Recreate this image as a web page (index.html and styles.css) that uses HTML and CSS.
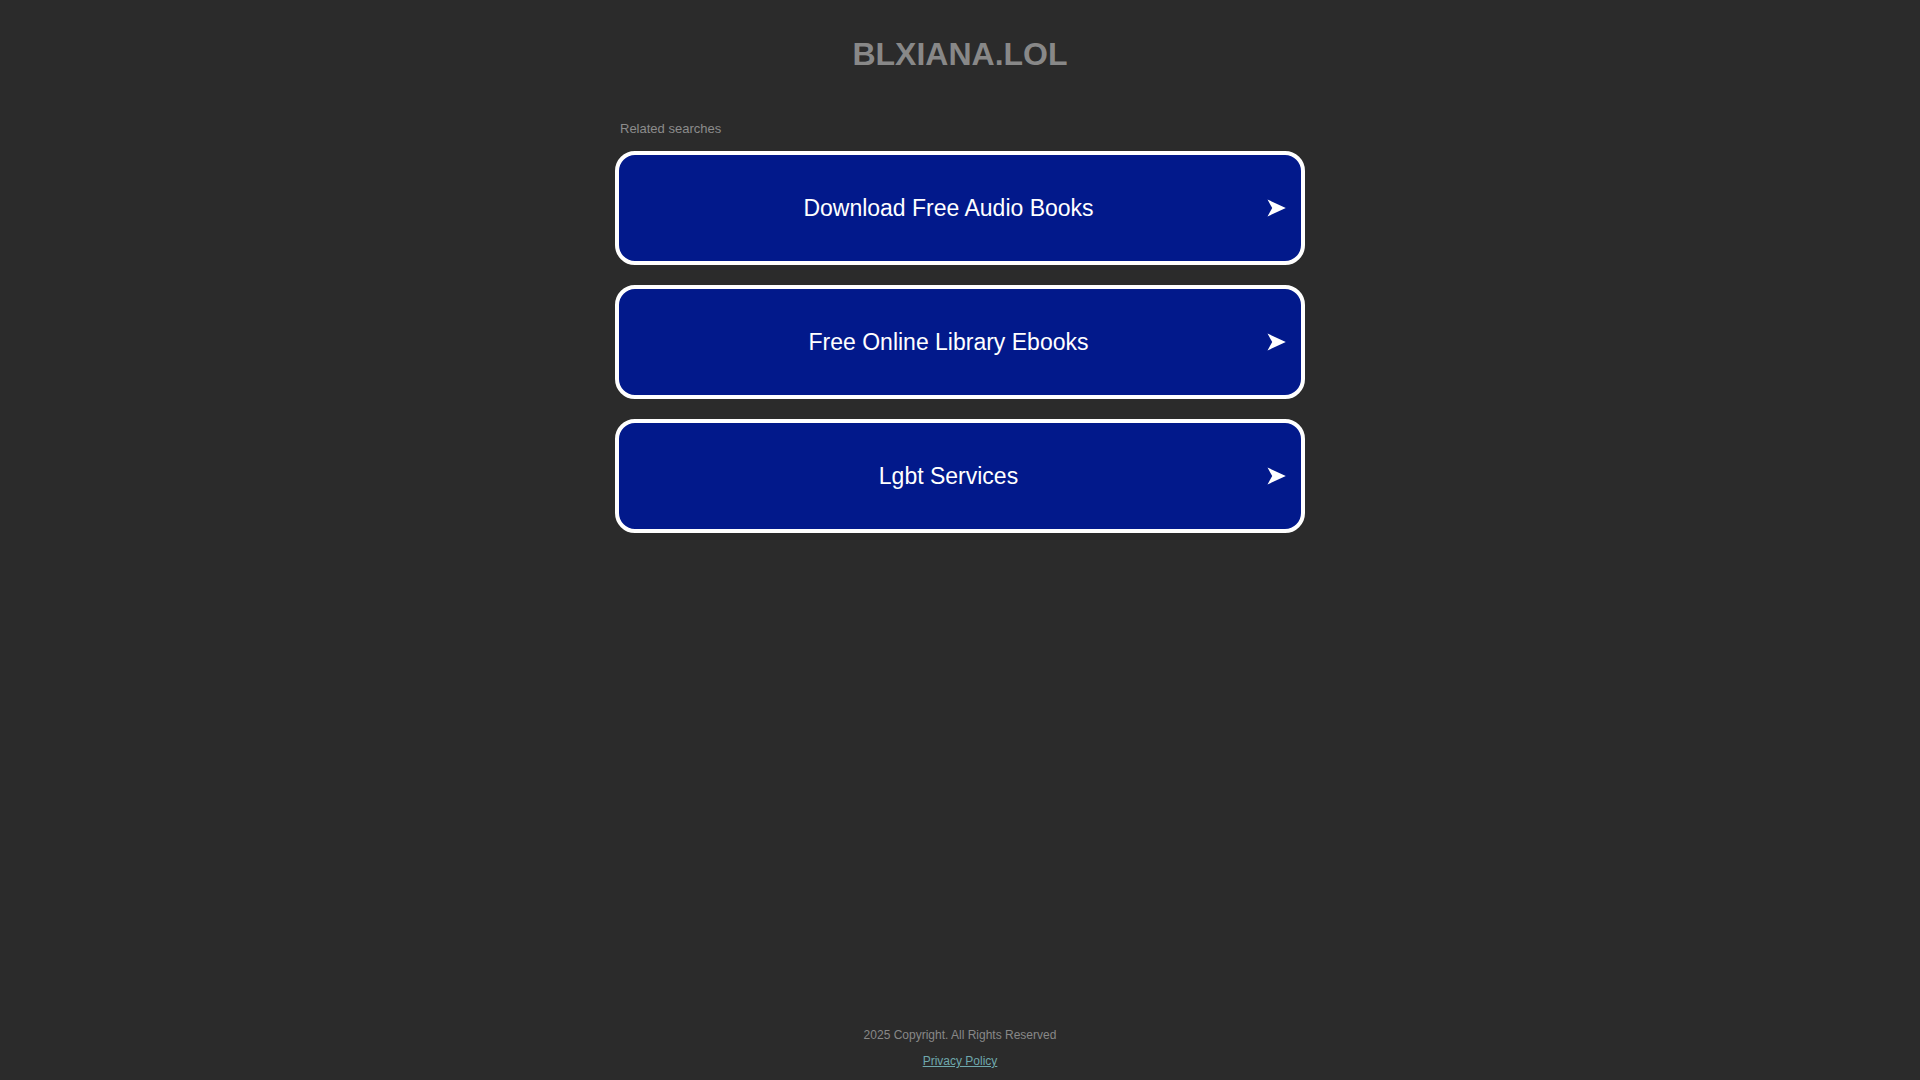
FILE: index.html
```html
<!DOCTYPE html>
<html lang="en">
<head>
<meta charset="utf-8">
<title>blxiana.lol</title>
<link rel="stylesheet" href="styles.css">
</head>
<body>
<div class="page">
  <main class="content">
    <h1 class="domain">BLXIANA.LOL</h1>
    <section class="related">
      <p class="related-title">Related searches</p>
      <ul class="links">
        <li><a class="link" href="#"><span class="link-text">Download Free Audio Books</span><svg class="arrow" viewBox="0 0 19 18" width="19" height="18"><path d="M0.5 0.5 L18.8 9 L0.5 17.5 L5.2 9 Z" fill="#fff"/></svg></a></li>
        <li><a class="link" href="#"><span class="link-text">Free Online Library Ebooks</span><svg class="arrow" viewBox="0 0 19 18" width="19" height="18"><path d="M0.5 0.5 L18.8 9 L0.5 17.5 L5.2 9 Z" fill="#fff"/></svg></a></li>
        <li><a class="link" href="#"><span class="link-text">Lgbt Services</span><svg class="arrow" viewBox="0 0 19 18" width="19" height="18"><path d="M0.5 0.5 L18.8 9 L0.5 17.5 L5.2 9 Z" fill="#fff"/></svg></a></li>
      </ul>
    </section>
  </main>
  <footer class="footer">
    <p class="copyright">2025 Copyright. All Rights Reserved</p>
    <p class="privacy"><a href="#">Privacy Policy</a></p>
  </footer>
</div>
</body>
</html>
```

FILE: styles.css
```css
html, body {
  margin: 0;
  padding: 0;
  background: #2b2b2b;
  font-family: "Liberation Sans", Arial, sans-serif;
}

.page {
  min-height: 100vh;
  display: flex;
  flex-direction: column;
  box-sizing: border-box;
}

.content {
  width: 690px;
  margin: 0 auto;
  display: flex;
  flex-direction: column;
}

.domain {
  margin: 36px 0 0;
  font-size: 32px;
  line-height: 36px;
  font-weight: bold;
  color: #888888;
  text-align: center;
}

.related {
  margin-top: 49px;
}

.related-title {
  margin: 0;
  padding-left: 5px;
  font-size: 13px;
  line-height: 16px;
  color: #8c8c8c;
}

.links {
  list-style: none;
  margin: 14px 0 0;
  padding: 0;
  display: flex;
  flex-direction: column;
  gap: 20px;
}

.link {
  box-sizing: border-box;
  height: 114px;
  display: flex;
  align-items: center;
  padding: 0 15px;
  background: #02198b;
  border: 4px solid #ffffff;
  border-radius: 20px;
  color: #ffffff;
  text-decoration: none;
}

.link-text {
  flex: 1;
  margin-right: 4px;
  text-align: center;
  font-size: 23px;
  line-height: 28px;
}

.arrow {
  flex: none;
  display: block;
}

.footer {
  margin-top: auto;
  padding-bottom: 12px;
  text-align: center;
  font-size: 12px;
  line-height: 14px;
}

.copyright {
  margin: 0;
  color: #888888;
}

.privacy {
  margin: 12px 0 0;
}

.privacy a {
  color: #6fa8ad;
  text-decoration: underline;
}
```
